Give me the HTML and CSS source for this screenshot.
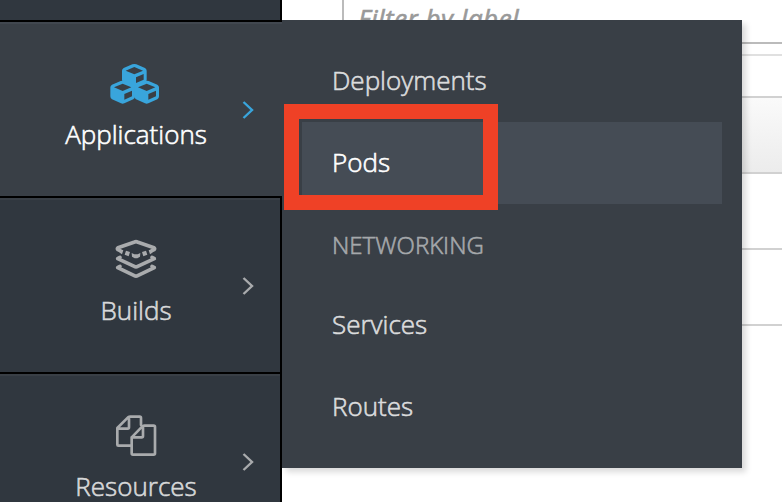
FILE: index.html
```html
<!DOCTYPE html>
<html lang="en">
<head>
<meta charset="utf-8">
<title>Applications</title>
<link rel="stylesheet" href="styles.css">
</head>
<body>
<div class="app">
  <nav class="sidebar">
    <div class="item item-top"></div>
    <div class="item active">
      <svg class="icon" viewBox="0 0 270 180">
        <defs>
          <path id="cube" fill-rule="evenodd" d="M0-35Q3-35 6-34L32-23Q37-20 37-15V12Q37 18 32 21L5 33Q0 35-5 33L-32 21Q-37 18-37 12V-15Q-37-20-32-23L-6-34Q-3-35 0-35ZM0-26L-26-15L0-4L26-15ZM5 5V22L28 12V-5Z"/>
        </defs>
        <g fill="currentColor">
          <use href="#cube" x="133" y="77"/>
          <use href="#cube" x="98" y="127"/>
          <use href="#cube" x="170" y="127"/>
        </g>
      </svg>
      <span class="label">Applications</span>
      <svg class="chevron" viewBox="0 0 12 20"><path d="M1.5 2L10 10L1.5 18"/></svg>
    </div>
    <div class="item">
      <svg class="icon" viewBox="-30 -9 270 180">
        <g fill="none" stroke="currentColor" stroke-width="11" stroke-linejoin="round" stroke-linecap="round">
          <path d="M60 65L54 62Q50 59 54 56L104 39Q108 37 112 39L162 56Q166 59 162 62L156 65"/>
          <path d="M60 85L53 89L103 112Q108 115 113 112L163 89L156 85"/>
          <path d="M60 112L53 116L103 140Q108 143 113 140L163 116L156 112"/>
        </g>
        <g fill="currentColor">
          <path d="M78 65L90 69L86 82L74 77ZM138 65L126 69L130 82L142 77ZM95 72L103 76H113L121 72L120 83L112 88H104L96 83ZM60 60L70 64L66 76L59 71ZM156 60L146 64L150 76L157 71Z"/>
        </g>
      </svg>
      <span class="label">Builds</span>
      <svg class="chevron" viewBox="0 0 12 20"><path d="M1.5 2L10 10L1.5 18"/></svg>
    </div>
    <div class="item">
      <svg class="icon" viewBox="-30 -9 270 180">
        <g fill="none" stroke="currentColor" stroke-width="8" stroke-linejoin="round" stroke-linecap="round">
          <path d="M92 122H55Q52 122 52 119V69L84 37Q87 35 91 35H119Q123 35 123 39V60M52 71H83Q87 71 87 67V36"/>
          <path d="M95 97L127 64Q130 62 134 62H161Q165 62 165 66V145Q165 149 161 149H99Q95 149 95 145V97H125Q129 97 129 93V63"/>
        </g>
      </svg>
      <span class="label">Resources</span>
      <svg class="chevron" viewBox="0 0 12 20"><path d="M1.5 2L10 10L1.5 18"/></svg>
    </div>
  </nav>
  <main class="content">
    <div class="filter">Filter by label</div>
    <div class="divider"></div>
    <div class="table">
      <div class="thead"></div>
      <div class="row"></div>
      <div class="row"></div>
    </div>
  </main>
  <div class="flyout">
    <div class="link">Deployments</div>
    <div class="link selected">Pods</div>
    <div class="heading">NETWORKING</div>
    <div class="link">Services</div>
    <div class="link">Routes</div>
  </div>
  <div class="marker"></div>
</div>
</body>
</html>
```

FILE: styles.css
```css
* { box-sizing: border-box; }
body { margin: 0; background: #fff; font-family: "Open Sans", sans-serif; font-size: 26px; font-weight: 300; }
.app { position: relative; display: flex; width: 782px; height: 502px; overflow: hidden; }
.sidebar { width: 282px; height: 502px; flex: none; background: #000; color: #a9abad; }
.item {
  position: relative;
  display: flex;
  flex-direction: column;
  align-items: center;
  width: 280px;
  height: 174px;
  margin-bottom: 2px;
  padding: 28px 10px 0 0;
  background: #30373f;
  border-top: 2px solid #393f46;
}
.item-top { height: 20px; padding: 0; border: 0; }
.active { width: 282px; padding-right: 12px; background: #393f46; border-color: #41474f; color: #39a5dc; }
.icon { display: block; width: 90px; height: 60px; flex: none; margin-top: -2px; }
.label { margin-top: 6px; padding-left: 2px; line-height: 36px; color: #d7d8d9; white-space: nowrap; }
.active .label { color: #fff; }
.label, .link, .heading { -webkit-text-stroke: 0.6px currentColor; }
.chevron { position: absolute; left: 242px; top: 76px; width: 12px; height: 20px; fill: none; stroke: currentColor; stroke-width: 2.4; }
.content { flex: 1; }
.filter {
  width: 460px;
  height: 44px;
  margin-left: 60px;
  padding-left: 14px;
  border-left: 2px solid #bbb;
  border-bottom: 2px solid #bbb;
  color: #999;
  font-style: italic;
  font-weight: 400;
  letter-spacing: 0.5px;
  -webkit-text-stroke: 0.6px currentColor;
  line-height: 36px;
}
.divider { height: 12px; border-bottom: 2px solid #e0e0e0; }
.table { margin-top: 40px; border-top: 2px solid #d1d1d1; }
.thead { height: 76px; background: linear-gradient(#fafafa, #ececec); border-bottom: 2px solid #d1d1d1; }
.row { height: 76px; border-bottom: 2px solid #d1d1d1; }
.flyout {
  position: absolute;
  left: 282px;
  top: 20px;
  width: 460px;
  height: 448px;
  padding: 20px;
  background: #393f46;
  box-shadow: 4px 4px 6px rgba(3, 3, 3, 0.15);
  clip-path: inset(0 -20px -20px 0);
  color: #dbdcdd;
}
.link { height: 82px; padding-left: 30px; line-height: 80px; }
.selected { background: #454c55; color: #fff; }
.heading { height: 80px; padding-left: 30px; line-height: 82px; font-size: 24px; color: #a5a8ab; }
.marker { position: absolute; left: 284px; top: 104px; width: 214px; height: 106px; border: 15px solid #ef4126; }
```
